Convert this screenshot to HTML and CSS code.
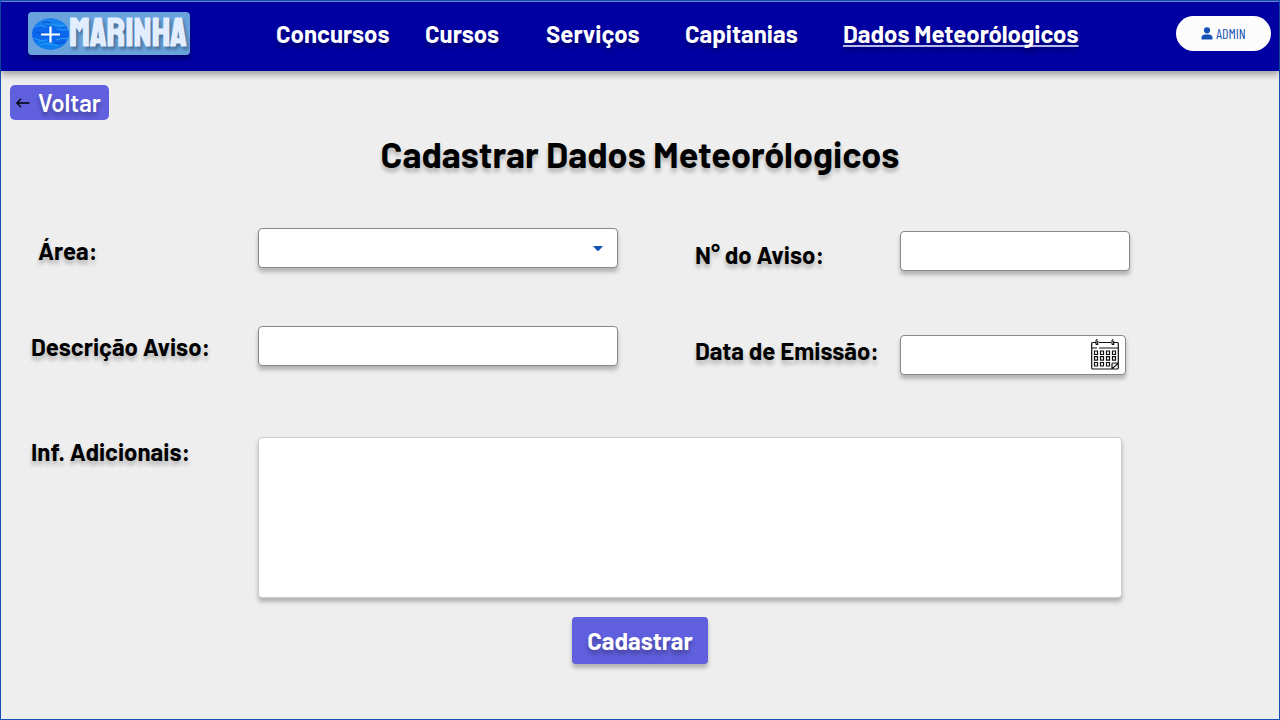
FILE: index.html
```html
<!DOCTYPE html>
<html lang="pt-BR">
<head>
<meta charset="utf-8">
<meta name="viewport" content="width=device-width, initial-scale=1">
<title>Cadastrar Dados Meteorólogicos</title>
<link rel="stylesheet" href="styles.css">
</head>
<body>
<div class="page">
  <header class="topbar">
    <a class="brand" href="#">
      <svg class="brand-mark" width="37" height="32" viewBox="0 0 37 32" aria-hidden="true">
        <defs>
          <clipPath id="sea"><ellipse cx="18.500" cy="16" rx="18.500" ry="15.500"/></clipPath>
          <filter id="soft"><feGaussianBlur stdDeviation=".5"/></filter>
        </defs>
        <g clip-path="url(#sea)">
          <rect width="38" height="32" fill="#0b68ee"/>
          <g filter="url(#soft)">
            <path d="M0 0h38v8q-9 3-18 0T0 9z" fill="#1681ee"/>
            <path d="M0 24q9-4 17 0t21-1v9H0z" fill="#0a7df0"/>
            <g fill="none" stroke-width="1">
              <path d="M2 9q7-3 13 0M20 6q7 3 13 1M1 20q8 4 15 2M24 22q6-3 13-1M7 27q9-3 19 1M25 11q6 2 12 0" stroke="#28a0f4"/>
              <path d="M3 14q6 3 10 0M23 25q5 2 10-1M10 5q5-2 9 0" stroke="#0750cc"/>
            </g>
          </g>
        </g>
        <path d="M18.500 8.500v16M9 16.500h19" stroke="#fff" stroke-width="2.200"/>
      </svg>
      <span class="brand-name">MARINHA</span>
    </a>
    <nav class="menu">
      <a href="#">Concursos</a>
      <a href="#">Cursos</a>
      <a href="#">Serviços</a>
      <a href="#">Capitanias</a>
      <a class="current" href="#" aria-current="page">Dados Meteorólogicos</a>
    </nav>
    <button class="admin" type="button">
      <svg width="12" height="13" viewBox="0 0 12 13" aria-hidden="true"><circle cx="6" cy="3.300" r="3.100"/><path d="M.5 12.500V11q0-3.500 3.500-3.500h4q3.500 0 3.500 3.500v1.500z"/></svg>
      ADMIN
    </button>
  </header>

  <main class="content">
    <button class="back" type="button">
      <svg width="14" height="10" viewBox="0 0 14 10" aria-hidden="true"><path d="M13.500 5H1M5 .8L.9 5 5 9.200"/></svg>
      Voltar
    </button>
    <h1 class="title">Cadastrar Dados Meteorólogicos</h1>

    <form class="form">
      <div class="columns">
        <div class="column column-main">
          <div class="field">
            <label class="inset" for="area">Área:</label>
            <div class="control">
              <select id="area" class="box"><option></option></select>
              <svg class="arrow" width="10" height="5" viewBox="0 0 10 5" aria-hidden="true"><path d="M0 0h10L6 4.500q-1 .8-2 0z"/></svg>
            </div>
          </div>
          <div class="field">
            <label for="descricao">Descrição Aviso:</label>
            <input id="descricao" class="box" type="text">
          </div>
        </div>
        <div class="column column-side">
          <div class="field">
            <label for="numero">N° do Aviso:</label>
            <input id="numero" class="box" type="text">
          </div>
          <div class="field">
            <label for="data">Data de Emissão:</label>
            <div class="control date">
              <input id="data" class="box" type="text">
              <button class="calendar" type="button" aria-label="Abrir calendário">
                <svg width="28" height="31" viewBox="0 0 28 31" aria-hidden="true">
                  <path d="M5 3.500H1.500Q.7 3.500 .7 4.500v24.500q0 1 1 1H21l6.300-6V4.500q0-1-1-1H23M8 3.500h12M.7 9H6m2 0h19.300M21 30v-5q0-1 1-1h5.300M27.300 24v5q0 1-1 1H21"/>
                  <path d="M5 5.500V2q0-1.300 1.500-1.300M5 5.500h1.700V2M21 5.500V2q0-1.300 1.500-1.300M21 5.500h1.700V2"/>
                  <path d="M3.500 12h3v3.500h-3zM9.500 12h3v3.500h-3zM15.500 12h3v3.500h-3zM21.500 12h3v3.500h-3zM3.500 17.700h3v3.500h-3zM9.500 17.700h3v3.500h-3zM15.500 17.700h3v3.500h-3zM21.500 17.700h3v3.500h-3zM3.500 23.500h3v3.500h-3zM9.500 23.500h3v3.500h-3zM15.500 23.500h3v3.500h-3z"/>
                </svg>
              </button>
            </div>
          </div>
        </div>
      </div>
      <div class="field field-wide">
        <label for="info">Inf. Adicionais:</label>
        <textarea id="info" class="box area"></textarea>
      </div>
      <button class="submit" type="submit">Cadastrar</button>
    </form>
  </main>
</div>
</body>
</html>
```
FILE: styles.css
```css
* { box-sizing: border-box; }

body {
  margin: 0;
  font-family: Barlow, Roboto, sans-serif;
  font-size: 24px;
  line-height: 28px;
  color: #000;
}

button, input, select, textarea { font: inherit; }
button { border: 0; padding: 0; cursor: pointer; }

.page {
  min-height: 100vh;
  border: 1px solid #1351b4;
  background: #eee;
}

.topbar {
  display: flex;
  align-items: center;
  height: 70px;
  padding: 0 8px 6px 27px;
  background: #0000a2;
  border-top: 1px solid #6f80c8;
  box-shadow: 0 4px 6px rgba(0, 0, 0, .3);
}

.brand {
  display: flex;
  align-items: center;
  width: 162px;
  height: 43px;
  padding-left: 4px;
  border-radius: 4px;
  background: #69a2dc;
  box-shadow: 0 4px 4px rgba(0, 0, 0, .3);
  text-decoration: none;
}

.brand-mark { flex: none; }

.brand-name {
  font-family: Staatliches, "Bebas Neue", "Liberation Sans Narrow", sans-serif;
  font-size: 39px;
  line-height: 43px;
  font-weight: 700;
  color: #e2edff;
  text-shadow: 2px 3px 3px rgba(0, 0, 0, .3);
}

.menu {
  display: grid;
  grid-template-columns: 149fr 121fr 139fr 158fr 333fr;
  flex: 1;
  padding-left: 86px;
  white-space: nowrap;
}

.menu a {
  justify-self: start;
  color: #fff;
  font-weight: 700;
  text-decoration: none;
  text-shadow: 0 4px 4px rgba(0, 0, 0, .3);
}

.menu .current {
  text-decoration: underline;
  text-decoration-color: #b9b9e6;
  text-decoration-thickness: 2px;
  text-underline-offset: 2px;
  text-decoration-skip-ink: none;
}

.admin {
  display: flex;
  align-items: center;
  justify-content: center;
  gap: 3px;
  width: 95px;
  height: 35px;
  border-radius: 18px;
  background: #fcfcfc;
  color: #1351b4;
  font-family: "Barlow Condensed", "Roboto Condensed", "Liberation Sans Narrow", sans-serif;
  font-size: 14px;
}

.admin svg { fill: #1351b4; }

.content { padding: 14px 0 54px; }

.back {
  display: flex;
  align-items: center;
  gap: 8px;
  height: 35px;
  margin-left: 9px;
  padding: 0 8px 0 6px;
  border-radius: 5px;
  background: #605fde;
  color: #fff;
  font-weight: 600;
  text-shadow: 0 4px 4px rgba(0, 0, 0, .3);
}

.back svg { fill: none; stroke: #000; stroke-width: 1.3; }

.title {
  margin: 12px 0 52px;
  font-size: 36px;
  line-height: 44px;
  font-weight: 700;
  text-align: center;
  text-shadow: 0 4px 4px rgba(0, 0, 0, .25);
}

.form {
  display: flex;
  flex-direction: column;
  padding: 0 149px 0 30px;
}

.columns { display: flex; gap: 77px; }
.column { display: flex; flex-direction: column; min-width: 0; }
.column-main { flex: 587; gap: 58px; }
.column-side { flex: 435; gap: 64px; padding-top: 3px; }

.field { display: flex; }

.field label {
  flex: none;
  width: 227px;
  padding-top: 7px;
  font-weight: 700;
  white-space: nowrap;
  text-shadow: 0 4px 4px rgba(0, 0, 0, .25);
}

.field .inset { padding: 9px 0 0 7px; }
.column-side label { width: 205px; padding-top: 10px; }
.column-side .field + .field label { padding-top: 2px; }

.control { position: relative; display: flex; flex: 1; min-width: 0; }
.date { margin-right: 4px; }

.box {
  flex: 1;
  min-width: 0;
  height: 40px;
  padding: 0 12px;
  border: 1px solid #888;
  border-radius: 4px;
  background: #fff;
  box-shadow: 0 4px 4px rgba(0, 0, 0, .25);
  font-size: 18px;
  appearance: none;
}

.arrow {
  position: absolute;
  top: 18px;
  right: 15px;
  fill: #1351b4;
  pointer-events: none;
}

.calendar {
  position: absolute;
  top: 4px;
  right: 7px;
  height: 31px;
  background: none;
}

.calendar svg { display: block; fill: none; stroke: #111; stroke-width: 1.2; }

.field-wide { margin: 62px 8px 0 0; }
.field-wide label { padding-top: 1px; }

.area {
  height: 161px;
  padding: 8px 12px;
  border-color: #ccc;
  resize: none;
}

.submit {
  align-self: center;
  width: 136px;
  height: 47px;
  margin: 19px 0 0 119px;
  border-radius: 4px;
  background: #605fde;
  box-shadow: 0 4px 4px rgba(0, 0, 0, .25);
  color: #fff;
  font-weight: 700;
  text-shadow: 0 4px 4px rgba(0, 0, 0, .3);
}
```
